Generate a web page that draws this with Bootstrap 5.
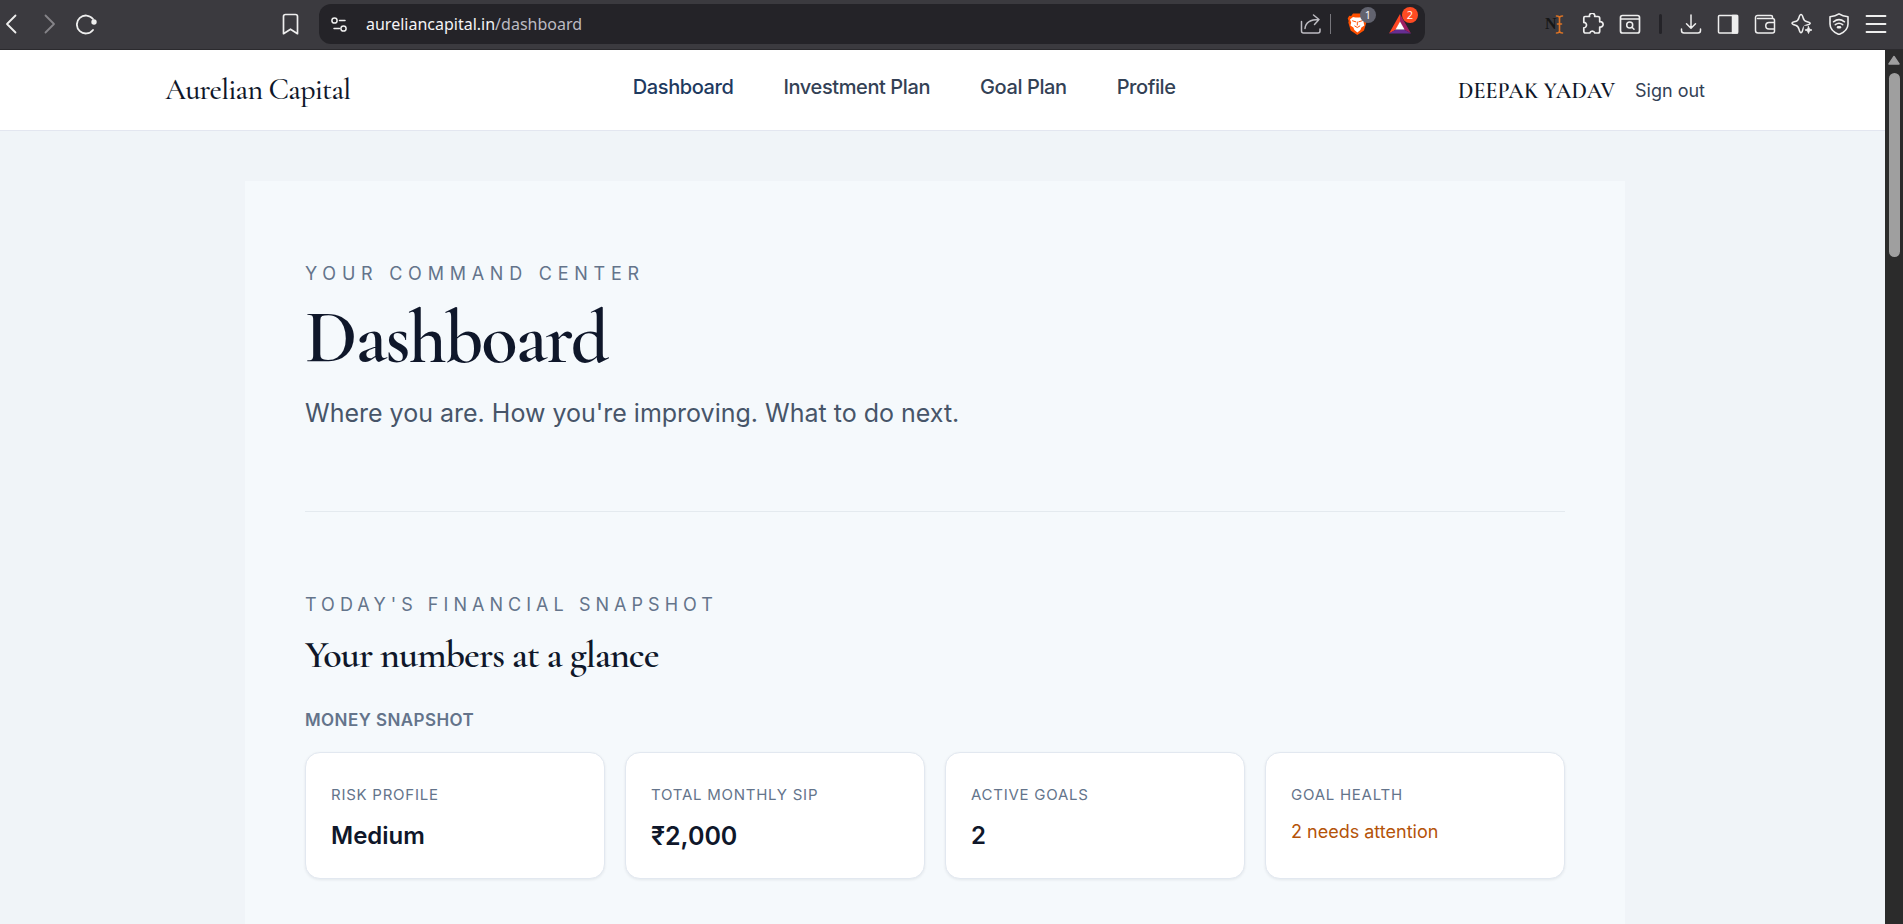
<!DOCTYPE html>
<html lang="en">
<head>
<meta charset="utf-8">
<meta name="viewport" content="width=device-width, initial-scale=1">
<title>Aurelian Capital – Dashboard</title>
<link href="https://cdn.jsdelivr.net/npm/bootstrap@5.3.0/dist/css/bootstrap.min.css" rel="stylesheet">
<style>
  :root { --ink: #0f172a; --slate: #64748b; --line: #e2e8f0; }
  body { font-family: Inter, "Liberation Sans", sans-serif; background: #f0f4f8; color: var(--ink); }
  .display-serif { font-family: "Cormorant Garamond", "Liberation Serif", serif; font-weight: 600; }
  .tight { letter-spacing: -0.025em; }

  /* browser toolbar */
  .toolbar { height: 50px; background: #3b3a3f; border-bottom: 1px solid #2b2a2e; padding: 0 16px 1px 0; color: #eee; }
  .tool { border: 0; background: none; padding: 0; color: inherit; width: 22px; height: 22px; line-height: 1; flex: none; position: relative; }
  .tool svg { display: block; width: 22px; height: 22px; fill: none; stroke: currentColor; stroke-width: 1.5; stroke-linecap: round; stroke-linejoin: round; }
  .tool-muted { color: #858489; }
  .tool-soft { color: #bdbcc2; }
  .nav-tools { width: 279px; gap: 16px; }
  .omnibox { height: 40px; background: #242328; border-radius: 12px; margin-left: 18px; margin-right: 120px; padding: 0 14px 0 9px; }
  .address { font: 16px/24px "Noto Sans", "Open Sans", sans-serif; color: #f4f4f6; text-decoration: none; margin-left: 16px; }
  .address span { color: #bcbbc3; }
  .rule-light { width: 1px; height: 20px; background: #77767c; }
  .rule-dark { width: 3px; height: 20px; background: #242328; border-radius: 2px; margin: 0 3px; }
  .shields { margin-right: 20px; }
  .extension-tools { gap: 15px; }
  .count { position: absolute; left: 13px; top: -6px; min-width: 16px; height: 16px; border-radius: 8px; font: 11px/16px "Open Sans", sans-serif; color: #fff; background: #62636f; text-align: center; }
  .count-hot { background: #ff4b23; }

  /* scroll bar column */
  .scroll-track { width: 18px; background: #2b2b2b; padding-top: 5px; flex: none; }
  .scroll-thumb { width: 11px; height: 184px; border-radius: 6px; background: #9f9f9f; }

  /* site header */
  .page { padding-right: 15px; }
  .site-header { height: 81px; background: #fff; border-bottom: 1px solid #e3e6f0; }
  .header-inner { max-width: 1540px; }
  .brand { font-size: 30px; line-height: 36px; font-weight: 500; color: var(--ink); }
  .site-nav { gap: 50px; font-size: 20px; line-height: 30px; font-weight: 500; letter-spacing: -0.02em; padding-bottom: 6px; }
  .site-nav a { color: #334155; text-decoration: none; }
  .site-nav a.active { color: #1e3a5f; }
  .user-box { gap: 20px; padding-top: 2px; }
  .user-name { font-size: 22px; line-height: 28px; color: var(--ink); }
  .sign-out { font-size: 18px; line-height: 28px; color: #334155; border: 0; background: none; padding: 0; }

  /* dashboard panel */
  .panel { max-width: 1380px; margin-top: 50px; background: #f5f9fc; padding: 0 60px; }
  .band { padding: 79px 0; }
  .band + .band { border-top: 1px solid #e4eaef; }
  .eyebrow { font-size: 18px; line-height: 28px; letter-spacing: 0.28em; color: var(--slate); text-transform: uppercase; margin: 0; }
  .eyebrow-wide { letter-spacing: 0.32em; }
  .page-title { font-size: 75px; line-height: 72px; margin: 14px 0 20px; }
  .intro { font-size: 25px; line-height: 38px; color: #475569; margin: 0; }
  .section-title { font-size: 38px; line-height: 48px; margin: 12px 0 27px; }
  .group-title { font-size: 17px; line-height: 28px; font-weight: 600; letter-spacing: 0.025em; color: var(--slate); text-transform: uppercase; margin: 0 0 18px; }
  .stats { --bs-gutter-x: 20px; --bs-gutter-y: 20px; }
  .stat { border: 1px solid var(--line); border-radius: 15px; padding: 24px 25px; box-shadow: 0 1px 3px #0f172a14; height: 100%; background: #fff; }
  .stat dt { font-size: 15px; line-height: 36px; font-weight: 400; letter-spacing: 0.05em; color: var(--slate); text-transform: uppercase; margin-bottom: 5px; }
  .stat dd { font-size: 24px; line-height: 36px; font-weight: 600; margin: 0; }
  .stat dd.amount { font-size: 25px; }
  .stat dd.alert-text { font-size: 18px; line-height: 28px; font-weight: 400; color: #b45309; }
</style>
</head>
<body class="d-flex flex-column min-vh-100">

<div class="toolbar d-flex align-items-center">
  <div class="nav-tools d-flex">
    <button class="tool" aria-label="Back"><svg viewBox="0 0 22 22"><path d="M15.500 2.500 7 11l8.500 8.500" stroke-width="1.800"/></svg></button>
    <button class="tool tool-muted" aria-label="Forward"><svg viewBox="0 0 22 22"><path d="M7.500 2.500 16 11l-8.500 8.500" stroke-width="1.800"/></svg></button>
    <button class="tool" aria-label="Reload"><svg viewBox="0 0 22 22"><path d="M17 6A9 9 0 1 0 17 17" stroke-width="1.800"/><circle cx="18" cy="9" r="2.700" fill="currentColor" stroke="none"/></svg></button>
  </div>
  <button class="tool" aria-label="Bookmark"><svg viewBox="0 0 22 22"><path d="M4.500 3.500C4.500 2.300 5.300 1.500 6.500 1.500h10c1.200 0 2 .8 2 2v17.200l-7-4.500-7 4.500z" stroke-width="1.700"/></svg></button>
  <div class="omnibox d-flex align-items-center flex-grow-1">
    <button class="tool" aria-label="Site settings"><svg viewBox="0 0 22 22"><circle cx="6.500" cy="7.500" r="2.600"/><path d="M11.500 7.500H17M6 15.500h5.500"/><circle cx="15.500" cy="15.500" r="2.600"/></svg></button>
    <a class="address flex-grow-1" href="#">aureliancapital.in<span>/dashboard</span></a>
    <button class="tool tool-soft" aria-label="Share"><svg viewBox="0 0 22 22"><path d="M1.500 8.500V18c0 1.300.7 2 2 2H18c1.300 0 2-.7 2-2v-2M5 15.500c.5-5.500 4-9 14-9M13.500 2 19 6.500l-4.500 5"/></svg></button>
    <span class="rule-light ms-2 me-3"></span>
    <button class="tool shields" aria-label="Brave Shields"><svg viewBox="0 0 22 22"><path stroke="none" fill="#ff5000" d="M6 .500h8L16.500 3l2-.3L20 5.500 19 8l.4 1.500L17 17.500 10.300 22 3.700 17.500 1.300 9.500 1.700 8l-1-2.500L2.200 2.700l2 .3z"/><path stroke="none" fill="#fff" d="m3 6.500 3-2.500 2.500.6h3.600l2.500-.6 3 2.500-1 3 .8 3-3 2-1 2.500-3 2.500-3-2.500-1-2.500-3-2 .8-3z"/><path stroke="#ff5000" stroke-width="1" d="m5.500 7.800 3.200 1M15 7.800l-3.200 1M10.300 9v3M7.800 13l2.500 1.500 2.500-1.500"/></svg><span class="count">1</span></button>
    <button class="tool" aria-label="Rewards"><svg viewBox="0 0 22 22"><path stroke="none" fill="#ff4724" d="M11 1 0 20.500l7-4L11 9z"/><path stroke="none" fill="#9e1f63" d="m11 1 11 19.500-7-4L11 9z"/><path stroke="none" fill="#662d91" d="M0 20.500h22l-7-4H7z"/><path stroke="none" fill="#fff" d="m11 8.500 4.500 8h-9z"/></svg><span class="count count-hot">2</span></button>
  </div>
  <div class="extension-tools d-flex align-items-center">
    <button class="tool" aria-label="Text tool"><svg viewBox="0 0 22 22"><text x="0" y="16" font-family="Liberation Serif" font-size="16" font-weight="700" fill="#161616" stroke="none">N</text><path stroke="#dc7325" stroke-width="1.600" d="M11.500 3c2 0 3 .5 3 2 0-1.500 1-2 3-2M14.500 5v12.500M11.500 20c2 0 3-.5 3-2 0 1.500 1 2 3 2M12.500 11h4"/></svg></button>
    <button class="tool" aria-label="Extensions"><svg viewBox="0 0 22 22"><path stroke-width="1.700" d="M3 3.500h4.500a2.700 2.700 0 1 1 5.200 0H16c1.200 0 1.700.5 1.700 1.700v3.600a2.700 2.700 0 1 1 0 5.200v4.300c0 1.200-.5 1.700-1.700 1.700h-3.200a2.600 2.600 0 0 0-5 0H3.500c-1 0-1.700-.6-1.700-1.700v-3.500a2.700 2.700 0 1 0 0-5.400V5c0-1 .4-1.500 1.200-1.500z"/></svg></button>
    <button class="tool" aria-label="Search page"><svg viewBox="0 0 22 22"><rect x="1.500" y="2.500" width="19" height="17.500" rx="2" stroke-width="1.700"/><path d="M2 6h18"/><circle cx="10.700" cy="12" r="3"/><path d="m13 14.300 2 2"/></svg></button>
    <span class="rule-dark"></span>
    <button class="tool" aria-label="Downloads"><svg viewBox="0 0 22 22"><path d="M11 2v13M6.500 10.800 11 15.300l4.500-4.500M1.500 16v1.500c0 1.700.8 2.500 2.500 2.500h14c1.700 0 2.500-.8 2.500-2.500V16"/></svg></button>
    <button class="tool" aria-label="Sidebar"><svg viewBox="0 0 22 22"><rect x="1.500" y="2.500" width="19" height="17.500" rx="1"/><path fill="currentColor" d="M15.500 2.500h5V20h-5z"/></svg></button>
    <button class="tool" aria-label="Wallet"><svg viewBox="0 0 22 22"><path d="M18.500 5.500V4c0-1-.5-1.500-1.500-1.500H3.500A2 2 0 0 0 1.500 4.500v13c0 1.500 1 2.500 2.500 2.500h14.500c1.200 0 2-.8 2-2V7.500c0-1.200-.8-2-2-2H3.500M20.500 9.500H15a3 3 0 0 0 0 6.500h5.500z"/></svg></button>
    <button class="tool" aria-label="Leo AI"><svg viewBox="0 0 22 22"><path d="M10 1.500c1 0 1.500 1 2 3s1.500 3.500 3.500 4 3.700.8 3.700 1.800-1.700 1.500-3.700 2-3 2-3.500 4-1 3.500-2 3.500-1.500-1.500-2-3.500-1.500-3.500-3.500-4-3.500-1-3.500-2 1.500-1.300 3.500-1.800 3-2 3.500-4 1-3 2-3z"/><path fill="#3b3a3f" stroke="#3b3a3f" d="M13.500 13.500h8v8h-8z"/><path fill="currentColor" stroke-width=".8" d="m17.500 13.500 1 2.500 2.500 1-2.500 1-1 2.500-1-2.500-2.500-1 2.500-1z"/></svg></button>
    <button class="tool" aria-label="VPN"><svg viewBox="0 0 22 22"><path stroke-width="1.600" d="M11 .9c2.500 1.700 5 2.500 9 2.800V11c0 5-4 8.500-9 10.500C6 19.500 2 16 2 11V3.700c4-.3 6.500-1.100 9-2.800z"/><path d="M5.500 8.800c3.300-2.600 7.700-2.600 11 0M7.300 11.700c2.200-1.700 5.200-1.700 7.400 0"/><path d="M10 14.300h2" stroke-width="2.400"/></svg></button>
    <button class="tool" aria-label="Menu"><svg viewBox="0 0 22 22"><path stroke-width="1.800" d="M1.500 3h19M1.500 11h19M1.500 19h19"/></svg></button>
  </div>
</div>

<div class="d-flex flex-grow-1">
  <div class="flex-grow-1 d-flex flex-column">
    <header class="site-header page">
      <div class="header-inner mx-auto h-100 d-flex align-items-center justify-content-between">
        <a class="brand display-serif tight text-decoration-none" href="#">Aurelian Capital</a>
        <nav class="site-nav d-flex">
          <a class="active" href="#" aria-current="page">Dashboard</a>
          <a href="#">Investment Plan</a>
          <a href="#">Goal Plan</a>
          <a href="#">Profile</a>
        </nav>
        <div class="user-box d-flex align-items-center">
          <span class="user-name display-serif">DEEPAK YADAV</span>
          <button class="sign-out">Sign out</button>
        </div>
      </div>
    </header>

    <div class="page flex-grow-1 d-flex flex-column">
      <main class="panel w-100 mx-auto flex-grow-1">
        <section class="band">
          <p class="eyebrow eyebrow-wide">Your command center</p>
          <h1 class="page-title display-serif tight">Dashboard</h1>
          <p class="intro">Where you are. How you're improving. What to do next.</p>
        </section>
        <section class="band pb-0">
          <p class="eyebrow">Today's financial snapshot</p>
          <h2 class="section-title display-serif tight">Your numbers at a glance</h2>
          <h3 class="group-title">Money snapshot</h3>
          <div class="row stats row-cols-2 row-cols-lg-4">
            <div class="col"><dl class="stat mb-0"><dt>Risk profile</dt><dd>Medium</dd></dl></div>
            <div class="col"><dl class="stat mb-0"><dt>Total monthly SIP</dt><dd class="amount">₹2,000</dd></dl></div>
            <div class="col"><dl class="stat mb-0"><dt>Active goals</dt><dd>2</dd></dl></div>
            <div class="col"><dl class="stat mb-0"><dt>Goal health</dt><dd class="alert-text">2 needs attention</dd></dl></div>
          </div>
        </section>
      </main>
    </div>
  </div>
  <div class="scroll-track d-flex flex-column align-items-center">
    <svg width="12" height="10" viewBox="0 0 12 10" class="mb-2"><path d="M6 1.500 11 9H1z" fill="#9f9f9f" stroke="#9f9f9f" stroke-width="1.500" stroke-linejoin="round"/></svg>
    <div class="scroll-thumb"></div>
  </div>
</div>

<script src="https://cdn.jsdelivr.net/npm/bootstrap@5.3.0/dist/js/bootstrap.bundle.min.js"></script>
</body>
</html>
